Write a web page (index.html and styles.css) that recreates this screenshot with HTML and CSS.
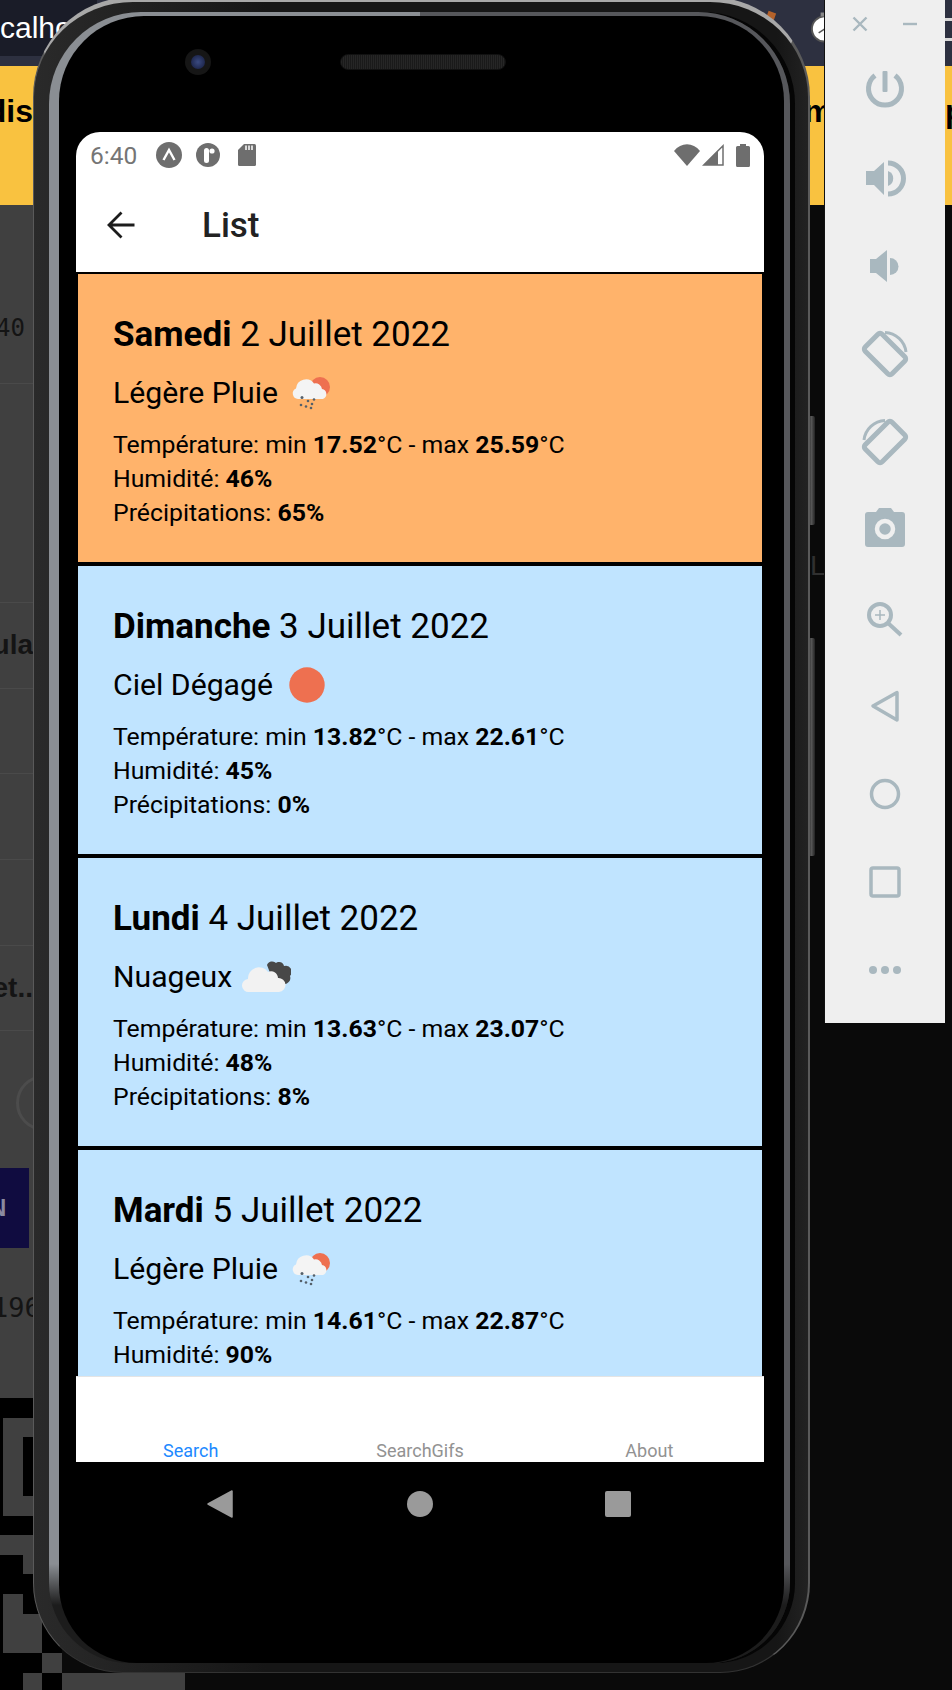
FILE: index.html
```html
<!DOCTYPE html>
<html>
<head>
<title>Weather list in the emulator</title>
<meta name="viewport" content="width=device-width, initial-scale=1">
<link rel="stylesheet" href="styles.css">
</head>
<body>

<!-- page open behind the emulator -->
<div class="desktop">
	<div class="topbar">
		<div class="tab-title">calho</div>
		<svg class="stopwatch" width="16" height="32" viewBox="0 0 16 32"><circle cx="16" cy="17" r="13" fill="#fff" stroke="#555" stroke-width="2"/><rect x="12" y="0" width="4" height="4" fill="#888"/><path d="M16 17 L10 21" stroke="#555" stroke-width="1.5"/></svg>
		<div class="topbar-lines"><span></span><span></span></div>
	</div>
	<div class="banner">
		<div class="banner-left">dis</div>
		<div class="banner-mid">m</div>
		<div class="banner-right">p</div>
	</div>
	<div class="table-strip">
		<div class="row row-a"><span class="mono">40</span></div>
		<div class="row row-b"></div>
		<div class="row row-c"><span class="bold">ula</span></div>
		<div class="row row-c"></div>
		<div class="row row-c"></div>
		<div class="row row-c"></div>
		<div class="row row-c"><span class="bold">et..</span></div>
		<div class="row-ring"><div class="ring"></div></div>
		<div class="row-btn"><span>N</span></div>
		<div class="row-last"><span class="mono">196</span></div>
	</div>
	<svg class="qr" width="190" height="293" viewBox="0 0 190 293">
		<rect x="0" y="0" width="62" height="293" fill="#000"/>
		<g fill="#404040">
			<path d="M3 20H33V118H3Z M23 39V98H33V39Z" fill-rule="evenodd"/>
			<rect x="0" y="137" width="33" height="20"/>
			<rect x="23" y="157" width="10" height="19"/>
			<rect x="3" y="196" width="20" height="20"/>
			<rect x="3" y="216" width="39" height="39"/>
			<rect x="42" y="255" width="20" height="20"/>
			<rect x="23" y="275" width="19" height="18"/>
			<rect x="62" y="275" width="123" height="18"/>
		</g>
	</svg>
	<div class="faint-text">Lo</div>
</div>

<div class="corner-bit"></div>
<div class="side-btn side-btn-power"></div>
<div class="side-btn side-btn-volume"></div>

<div class="phone">
	<div class="rim">
		<div class="face">
			<div class="earpiece">
				<div class="camera"><div class="lens"></div></div>
				<div class="speaker"></div>
			</div>

			<div class="screen">
				<div class="statusbar">
					<span class="clock">6:40</span>
					<svg class="st-expo" width="26" height="26" viewBox="0 0 26 26"><circle cx="13" cy="13" r="13" fill="#6e6e6e"/><path d="M7.5 18 L13 8 L18.5 18" fill="none" stroke="#fff" stroke-width="2.4"/></svg>
					<svg class="st-r" width="24" height="24" viewBox="0 0 24 24"><circle cx="12" cy="12" r="12" fill="#6e6e6e"/><rect x="8" y="5" width="5" height="15" rx="2.5" fill="#fff"/><circle cx="16" cy="8" r="2.6" fill="#fff"/></svg>
					<svg class="st-sd" width="18" height="22" viewBox="0 0 18 22"><path d="M6 0H16.500A1.500 1.500 0 0 1 18 1.500V20.500A1.500 1.500 0 0 1 16.500 22H1.500A1.500 1.500 0 0 1 0 20.500V6Z" fill="#6e6e6e"/><path d="M8 1.500V6 M11 1.500V6 M14 1.500V6" stroke="#fff" stroke-width="1.500"/></svg>
					<span class="st-gap"></span>
					<svg class="st-wifi" width="26" height="22" viewBox="0 0 26 22"><path d="M0 7 C7 -2 19 -2 26 7 L13 22Z" fill="#6e6e6e"/></svg>
					<svg class="st-signal" width="22" height="22" viewBox="0 0 22 22"><path d="M21 1.800V21H1.800Z" fill="none" stroke="#6e6e6e" stroke-width="1.500"/><path d="M16 6.500V21H1.800Z" fill="#6e6e6e"/></svg>
					<svg class="st-batt" width="14" height="23" viewBox="0 0 14 23"><path d="M4 0H10V2H12.500A1.500 1.500 0 0 1 14 3.500V21.500A1.500 1.500 0 0 1 12.500 23H1.500A1.500 1.500 0 0 1 0 21.500V3.500A1.500 1.500 0 0 1 1.500 2H4Z" fill="#6e6e6e"/></svg>
				</div>

				<div class="appbar">
					<svg class="back" width="28" height="28" viewBox="0 0 28 28"><path d="M27.500 14H3 M14.500 1.500 L2 14 L14.500 26.500" fill="none" stroke="#1c1c1c" stroke-width="2.800"/></svg>
					<span class="appbar-title">List</span>
				</div>

				<div class="list">
					<div class="card card-today">
						<div class="card-date"><b>Samedi</b> 2 Juillet 2022</div>
						<div class="card-weather">Légère Pluie
							<svg class="wx" width="50" height="50" viewBox="1 0 50 50"><use href="#wx-rain" width="50" height="50"/></svg>
						</div>
						<div class="card-line">Température: min <b>17.52</b>°C - max <b>25.59</b>°C</div>
						<div class="card-line">Humidité: <b>46%</b></div>
						<div class="card-line">Précipitations: <b>65%</b></div>
					</div>
					<div class="card">
						<div class="card-date"><b>Dimanche</b> 3 Juillet 2022</div>
						<div class="card-weather">Ciel Dégagé
							<svg class="wx" width="50" height="50" viewBox="0 0 50 50"><circle cx="25" cy="25" r="17.700" fill="#ee7050"/></svg>
						</div>
						<div class="card-line">Température: min <b>13.82</b>°C - max <b>22.61</b>°C</div>
						<div class="card-line">Humidité: <b>45%</b></div>
						<div class="card-line">Précipitations: <b>0%</b></div>
					</div>
					<div class="card">
						<div class="card-date"><b>Lundi</b> 4 Juillet 2022</div>
						<div class="card-weather">Nuageux
							<svg class="wx" width="50" height="50" viewBox="-1 0 50 50">
								<path d="M25 13 a5.500 5.500 0 0 1 9 -2 a5 5 0 0 1 8 3 a6 6 0 0 1 6 10 a6 6 0 0 1 -6 8 L30 26Z" fill="#484848"/>
								<path d="M7 40 a6.500 6.500 0 0 1 -1 -13 a11 11 0 0 1 20 -7 a7 7 0 0 1 10 6 a7 7 0 0 1 1 14Z" fill="#f2f2f2"/>
							</svg>
						</div>
						<div class="card-line">Température: min <b>13.63</b>°C - max <b>23.07</b>°C</div>
						<div class="card-line">Humidité: <b>48%</b></div>
						<div class="card-line">Précipitations: <b>8%</b></div>
					</div>
					<div class="card">
						<div class="card-date"><b>Mardi</b> 5 Juillet 2022</div>
						<div class="card-weather">Légère Pluie
							<svg class="wx" width="50" height="50" viewBox="1 0 50 50"><use href="#wx-rain" width="50" height="50"/></svg>
						</div>
						<div class="card-line">Température: min <b>14.61</b>°C - max <b>22.87</b>°C</div>
						<div class="card-line">Humidité: <b>90%</b></div>
					</div>
				</div>

				<div class="tabbar">
					<span class="tab tab-active">Search</span>
					<span class="tab">SearchGifs</span>
					<span class="tab">About</span>
				</div>
			</div>

			<div class="navbar">
				<svg width="26" height="28" viewBox="0 0 26 28"><path d="M25 1 V27 L1 14Z" fill="#9a9a9a" stroke="#9a9a9a" stroke-width="1.500" stroke-linejoin="round"/></svg>
				<div class="nav-home"></div>
				<div class="nav-recent"></div>
			</div>
		</div>
	</div>
</div>

<!-- emulator side toolbar -->
<div class="toolbar">
	<div class="toolbar-top">
		<svg width="16" height="16" viewBox="0 0 16 16"><path d="M1.500 1.500 L14.500 14.500 M14.500 1.500 L1.500 14.500" stroke="#a9b8bf" stroke-width="2.400"/></svg>
		<svg width="16" height="16" viewBox="0 0 16 16"><path d="M1 8H15" stroke="#a9b8bf" stroke-width="2.400"/></svg>
	</div>
	<div class="tool"><svg class="tool-icon" viewBox="0 0 48 48"><path d="M14 9.500 A16.500 16.500 0 1 0 34 9.500" fill="none" stroke-width="5"/><rect x="21.500" y="5" width="5" height="21" rx="1"/></svg></div>
	<div class="tool"><svg class="tool-icon" viewBox="0 0 48 48"><path d="M5 17H13L23 8V41L13 31H5Z"/><path d="M27 17 A8 8 0 0 1 27 32Z"/><path d="M27 9 A15.500 15.500 0 0 1 27 40" fill="none" stroke-width="5"/></svg></div>
	<div class="tool"><svg class="tool-icon" viewBox="0 0 48 48"><path d="M9 17H15L26 8V40L15 31H9Z"/><path d="M29 16 A8.500 8.500 0 0 1 29 33Z"/></svg></div>
	<div class="tool"><svg class="tool-icon" viewBox="0 0 48 48"><rect x="12" y="5" width="24" height="38" rx="3" transform="rotate(-45 24 24)" fill="none" stroke-width="5"/><path d="M24 2.500 A22 22 0 0 1 45 22" fill="none" stroke-width="3"/></svg></div>
	<div class="tool"><svg class="tool-icon" viewBox="0 0 48 48"><rect x="12" y="5" width="24" height="38" rx="3" transform="rotate(45 24 24)" fill="none" stroke-width="5"/><path d="M24 2.500 A22 22 0 0 0 3 22" fill="none" stroke-width="3"/></svg></div>
	<div class="tool"><svg class="tool-icon" viewBox="0 0 48 48"><path d="M15 6L18 2H30L33 6H41A3 3 0 0 1 44 9V38A3 3 0 0 1 41 41H7A3 3 0 0 1 4 38V9A3 3 0 0 1 7 6Z"/><circle cx="24" cy="23" r="8" fill="none" stroke="#efefef" stroke-width="4.500"/></svg></div>
	<div class="tool"><svg class="tool-icon" viewBox="0 0 48 48"><circle cx="19" cy="21" r="11" fill="none" stroke-width="4"/><path d="M27.500 29.500 L40 41" fill="none" stroke-width="4"/><path d="M14 21H24 M19 16V26" fill="none" stroke-width="1.500"/></svg></div>
	<div class="tool"><svg class="tool-icon" viewBox="0 0 48 48"><path d="M12 24 L36 10.500 V38Z" fill="none" stroke-width="3.500" stroke-linejoin="round"/></svg></div>
	<div class="tool"><svg class="tool-icon" viewBox="0 0 48 48"><circle cx="24" cy="24" r="13.500" fill="none" stroke-width="3.500"/></svg></div>
	<div class="tool"><svg class="tool-icon" viewBox="0 0 48 48"><rect x="10" y="10" width="28" height="28" rx="2" fill="none" stroke-width="3.500"/></svg></div>
	<div class="tool"><svg class="tool-icon" viewBox="0 0 48 48"><circle cx="12" cy="24" r="4"/><circle cx="24" cy="24" r="4"/><circle cx="36" cy="24" r="4"/></svg></div>
</div>

<svg class="defs" width="0" height="0">
	<symbol id="wx-rain" viewBox="0 0 50 50">
		<circle cx="34" cy="19" r="10" fill="#ee7050"/>
		<path d="M12 31 a5.500 5.500 0 0 1 -2 -10.500 a10 10 0 0 1 18 -5 a6.500 6.500 0 0 1 8 5.500 a5.200 5.200 0 0 1 1 10Z" fill="#f4f4f4"/>
		<g fill="#55606a">
			<circle cx="16" cy="29.500" r="1.500"/><circle cx="22" cy="33" r="1.300"/><circle cx="28" cy="31.500" r="1.300"/>
			<circle cx="15" cy="37" r="1.300"/><circle cx="20" cy="38.500" r="1.300"/><circle cx="26" cy="36" r="1.300"/><circle cx="25" cy="40" r="1.300"/>
		</g>
	</symbol>
</svg>

</body>
</html>
```

FILE: styles.css
```css
html, body {
	margin: 0;
	padding: 0;
	background: #0a0a0a;
}
body {
	position: relative;
	width: 952px;
	height: 1690px;
	overflow: hidden;
	font-family: Roboto, sans-serif;
}
.defs {
	position: absolute;
}

/* page behind the emulator */
.desktop {
	position: relative;
	width: 952px;
	height: 1690px;
}
.topbar {
	display: flex;
	height: 66px;
	background: #2d3040;
}
.tab-title {
	width: 100px;
	height: 56px;
	background: #1a1c28;
	color: #fff;
	font: 30px/56px "Liberation Sans", sans-serif;
}
.stopwatch {
	margin: 12px 0 0 712px;
}
.topbar-lines {
	margin-left: 120px;
	width: 8px;
	padding-top: 18px;
}
.topbar-lines span {
	display: block;
	height: 3px;
	margin-bottom: 17px;
	background: #d8d8d8;
}
.banner {
	display: flex;
	height: 139px;
	background: #f9c240;
	color: #000;
	font: bold 32px/90px "Liberation Sans", sans-serif;
}
.banner-left {
	width: 33px;
	overflow: hidden;
	direction: rtl;
}
.banner-mid {
	margin-left: 771px;
	width: 141px;
}
.banner-right {
	width: 7px;
}
.table-strip {
	width: 33px;
	background: #404040;
	overflow: hidden;
	color: #141414;
	font: 28px "Liberation Sans", sans-serif;
	white-space: nowrap;
}
.row {
	display: flex;
	align-items: center;
	justify-content: flex-end;
	border-bottom: 1px solid #4a4a4a;
	box-sizing: border-box;
}
.row-a {
	height: 179px;
	padding: 67px 8px 0 0;
}
.row-b {
	height: 219px;
}
.row-c {
	height: 85.700px;
}
.mono {
	font-family: "DejaVu Sans Mono", monospace;
	font-size: 24px;
}
.bold {
	font-weight: bold;
}
.row-ring {
	height: 137px;
	padding: 44px 0 0 16px;
	box-sizing: border-box;
}
.ring {
	width: 50px;
	height: 50px;
	border: 3px solid #4c4c4c;
	border-radius: 50%;
}
.row-btn {
	width: 29px;
	height: 80px;
	background: #100c40;
	color: #8a8aa0;
	font: bold 24px/80px "Liberation Sans", sans-serif;
}
.row-btn span {
	display: block;
	margin-left: -11px;
}
.row-last {
	height: 150px;
	padding-top: 44px;
	box-sizing: border-box;
}
.row-last span {
	display: block;
	margin-left: -8px;
	font-size: 27px;
}
.qr {
	display: block;
}
.faint-text {
	position: absolute;
	left: 810px;
	top: 550px;
	color: #303030;
	font: 28px "Liberation Sans", sans-serif;
}
.corner-bit {
	position: absolute;
	left: 767px;
	top: 12px;
	width: 8px;
	height: 8px;
	background: #b5622a;
	transform: rotate(20deg);
}
.side-btn {
	position: absolute;
	left: 808px;
	width: 7px;
	background: linear-gradient(90deg, #222, #555 50%, #222);
	border-radius: 2px;
}
.side-btn-power {
	top: 416px;
	height: 109px;
}
.side-btn-volume {
	top: 638px;
	height: 218px;
}

/* phone frame */
.phone {
	position: absolute;
	left: 33px;
	top: -3px;
	width: 777px;
	height: 1676px;
	box-sizing: border-box;
	padding: 10px 18px 9px 15px;
	border-style: solid;
	border-width: 5px 2px 1px 1px;
	border-color: #a8a8a8 #5a5a5a #333 #5a5a5a;
	border-radius: 100px 100px 90px 90px;
	background: linear-gradient(90deg, #2a2a2a, #161616 30%, #161616 96%, #222);
}
.rim {
	height: 100%;
	box-sizing: border-box;
	padding: 4px 6px 0 10px;
	border-radius: 92px 92px 80px 80px;
	box-shadow: 5px 0 0 #050505;
	background:
		linear-gradient(180deg, transparent 94%, #1c1c1c 96.500%),
		linear-gradient(90deg, #8a8e93 50%, #56575b 50%);
}
.face {
	height: 100%;
	box-sizing: border-box;
	padding: 0 20px 0 17px;
	border-radius: 85px 85px 78px 78px;
	background: #000;
}
.earpiece {
	display: flex;
	align-items: center;
	height: 116px;
	padding: 0 0 24px 109px;
	box-sizing: border-box;
}
.camera {
	display: flex;
	align-items: center;
	justify-content: center;
	flex: none;
	width: 26px;
	height: 26px;
	border-radius: 50%;
	background: #161616;
}
.lens {
	width: 14px;
	height: 14px;
	border-radius: 50%;
	background: radial-gradient(#3a4a80, #141a3a);
}
.speaker {
	width: 166px;
	height: 16px;
	flex: none;
	margin-left: 129px;
	border-radius: 8px;
	background: repeating-linear-gradient(90deg, #262626 0 1px, #1a1a1a 1px 2px);
	border: 1px solid #111;
	box-sizing: border-box;
}

/* device screen */
.screen {
	display: flex;
	flex-direction: column;
	height: 1330px;
	background: #fff;
	border-radius: 24px 24px 0 0;
	overflow: hidden;
}
.statusbar {
	display: flex;
	align-items: center;
	height: 42px;
	box-sizing: border-box;
	padding: 4px 14px 0 14px;
	flex: none;
}
.clock {
	width: 47px;
	color: #757575;
	font-size: 24.500px;
}
.st-expo {
	margin-left: 19px;
}
.st-r {
	margin-left: 14px;
}
.st-sd {
	margin-left: 18px;
}
.st-gap {
	flex: 1;
}
.st-wifi {
	margin-right: 2px;
}
.st-signal {
	margin-right: 12px;
}
.appbar {
	display: flex;
	align-items: center;
	flex: none;
	height: 98px;
	box-sizing: border-box;
	padding: 4px 0 0 31px;
}
.appbar-title {
	margin-left: 67px;
	color: #222;
	font-size: 35px;
	font-weight: 500;
}
.list {
	flex: 1;
	overflow: hidden;
	background: #000;
}
.card {
	height: 292px;
	box-sizing: border-box;
	padding: 41px 35px 30px;
	border: 2px solid #000;
	background: #c0e4ff;
	color: #000;
}
.card-today {
	background: #ffb36b;
}
.card-date {
	font-size: 35px;
	line-height: 40px;
	margin-bottom: 12.500px;
}
.card-weather {
	display: flex;
	align-items: center;
	height: 50px;
	margin-bottom: 10.500px;
	font-size: 30.200px;
}
.wx {
	margin-left: 9px;
	filter: blur(0.4px);
}
.card-line {
	font-size: 24.800px;
	line-height: 34px;
}
.tabbar {
	display: flex;
	flex: none;
	height: 86px;
	box-sizing: border-box;
	align-items: flex-end;
	border-top: 1px solid #e4e4e4;
	background: #fff;
}
.tab {
	flex: 1;
	text-align: center;
	color: #929292;
	font-size: 18px;
	line-height: 22px;
}
.tab-active {
	color: #2089ff;
}
.navbar {
	display: flex;
	align-items: center;
	justify-content: center;
	gap: 174px;
	height: 84px;
	padding-right: 2px;
}
.nav-home {
	width: 26px;
	height: 26px;
	border-radius: 50%;
	background: #9a9a9a;
}
.nav-recent {
	width: 26px;
	height: 26px;
	margin-left: -2px;
	border-radius: 2px;
	background: #9a9a9a;
}

/* emulator toolbar */
.toolbar {
	position: absolute;
	left: 824px;
	top: 0;
	width: 120px;
	height: 1023px;
	border-left: 1px solid #111;
	background: #efefef;
}
.toolbar-top {
	display: flex;
	align-items: center;
	gap: 34px;
	height: 46px;
	padding: 2px 0 0 27px;
	box-sizing: border-box;
}
.tool {
	display: flex;
	align-items: center;
	justify-content: center;
	height: 88px;
	padding-right: 1px;
}
.tool-icon {
	width: 48px;
	height: 48px;
	overflow: visible;
	fill: #a9b8bf;
	stroke: #a9b8bf;
	stroke-width: 0;
}
```
